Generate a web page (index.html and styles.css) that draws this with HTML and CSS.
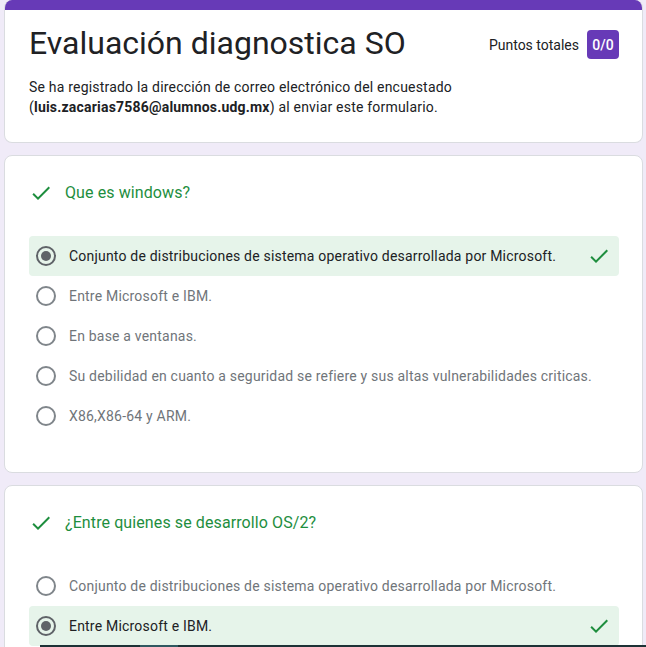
FILE: index.html
```html
<!DOCTYPE html>
<html lang="es">
<head>
<meta charset="utf-8">
<title>Evaluación diagnostica SO</title>
<link rel="stylesheet" href="styles.css">
</head>
<body>
<main class="page">
  <section class="card header-card">
    <div class="header-band"></div>
    <div class="header-body">
      <div class="title-row">
        <h1 class="title">Evaluación diagnostica SO</h1>
        <div class="score">
          <span class="score-label">Puntos totales</span>
          <span class="score-badge">0/0</span>
        </div>
      </div>
      <p class="desc">Se ha registrado la dirección de correo electrónico del encuestado (<b>luis.zacarias7586@alumnos.udg.mx</b>) al enviar este formulario.</p>
    </div>
  </section>

  <section class="card question-card">
    <div class="question">
      <svg class="check" viewBox="0 0 24 24"><path d="M9 16.17L4.83 12l-1.42 1.41L9 19 21 7l-1.41-1.41z"/></svg>
      <span class="q-text">Que es windows?</span>
    </div>
    <div class="options">
      <div class="option selected">
        <span class="radio checked"></span>
        <span class="opt-text">Conjunto de distribuciones de sistema operativo desarrollada por Microsoft.</span>
        <svg class="check opt-check" viewBox="0 0 24 24"><path d="M9 16.17L4.83 12l-1.42 1.41L9 19 21 7l-1.41-1.41z"/></svg>
      </div>
      <div class="option">
        <span class="radio"></span>
        <span class="opt-text">Entre Microsoft e IBM.</span>
      </div>
      <div class="option">
        <span class="radio"></span>
        <span class="opt-text">En base a ventanas.</span>
      </div>
      <div class="option">
        <span class="radio"></span>
        <span class="opt-text">Su debilidad en cuanto a seguridad se refiere y sus altas vulnerabilidades criticas.</span>
      </div>
      <div class="option">
        <span class="radio"></span>
        <span class="opt-text">X86,X86-64 y ARM.</span>
      </div>
    </div>
  </section>

  <section class="card question-card">
    <div class="question">
      <svg class="check" viewBox="0 0 24 24"><path d="M9 16.17L4.83 12l-1.42 1.41L9 19 21 7l-1.41-1.41z"/></svg>
      <span class="q-text">¿Entre quienes se desarrollo OS/2?</span>
    </div>
    <div class="options">
      <div class="option">
        <span class="radio"></span>
        <span class="opt-text">Conjunto de distribuciones de sistema operativo desarrollada por Microsoft.</span>
      </div>
      <div class="option selected">
        <span class="radio checked"></span>
        <span class="opt-text">Entre Microsoft e IBM.</span>
        <svg class="check opt-check" viewBox="0 0 24 24"><path d="M9 16.17L4.83 12l-1.42 1.41L9 19 21 7l-1.41-1.41z"/></svg>
      </div>
      <div class="option">
        <span class="radio"></span>
        <span class="opt-text">En base a ventanas.</span>
      </div>
    </div>
  </section>
</main>
<div class="taskbar"><span class="taskbar-active"></span></div>
</body>
</html>
```

FILE: styles.css
```css
html, body {
  margin: 0;
  padding: 0;
  background: #f0ebf8;
  font-family: Roboto, "Liberation Sans", Arial, sans-serif;
  color: #202124;
  overflow: hidden;
}

.page {
  width: 639px;
  margin: 0 3px 0 4px;
}

.card {
  background: #fff;
  border: 1px solid #dadce0;
  border-radius: 8px;
  margin-bottom: 12px;
  overflow: hidden;
}

.header-card {
  border-top: none;
}

.header-band {
  height: 10px;
  background: #673ab7;
}

.header-body {
  padding: 13px 23px 25px 24px;
}

.title-row {
  display: flex;
  align-items: flex-start;
  justify-content: space-between;
}

.title {
  margin: 0;
  font-size: 32px;
  line-height: 40px;
  font-weight: 400;
  color: #202124;
}

.score {
  display: flex;
  align-items: center;
  gap: 8px;
  margin-top: 7px;
}

.score-label {
  font-size: 14px;
  color: #202124;
}

.score-badge {
  display: inline-flex;
  align-items: center;
  justify-content: center;
  width: 32px;
  height: 29px;
  background: #673ab7;
  color: #fff;
  border-radius: 4px;
  font-size: 14px;
  font-weight: 500;
}

.desc {
  margin: 14px 0 0;
  font-size: 14px;
  line-height: 20px;
  letter-spacing: 0.2px;
  color: #202124;
}

.desc b {
  font-weight: 700;
}

.question-card {
  padding: 25px 23px 36px 24px;
}

.question {
  display: flex;
  align-items: center;
  gap: 12px;
  height: 24px;
}

.check {
  width: 24px;
  height: 24px;
  fill: #1e8e3e;
  flex: none;
}

.q-text {
  font-size: 16px;
  line-height: 24px;
  letter-spacing: 0.1px;
  color: #1e8e3e;
}

.options {
  margin-top: 31px;
}

.option {
  display: flex;
  align-items: center;
  height: 40px;
  padding: 0 8px 0 7px;
  border-radius: 4px;
}

.option.selected {
  background: #e6f4ea;
}

.radio {
  width: 20px;
  height: 20px;
  box-sizing: border-box;
  border: 2px solid #80868b;
  border-radius: 50%;
  flex: none;
  margin-right: 13px;
  position: relative;
}

.radio.checked {
  border-color: #5f6368;
}

.radio.checked::after {
  content: "";
  position: absolute;
  left: 3px;
  top: 3px;
  width: 10px;
  height: 10px;
  border-radius: 50%;
  background: #5f6368;
}

.opt-text {
  flex: 1;
  font-size: 14px;
  line-height: 20px;
  letter-spacing: 0.2px;
  color: #70757a;
}

.option.selected .opt-text {
  color: #202124;
}

.opt-check {
  margin-left: 8px;
}

.taskbar {
  position: fixed;
  left: 40px;
  right: 0;
  bottom: 0;
  height: 2px;
  background: #1d3236;
}

.taskbar-active {
  position: absolute;
  left: 100px;
  top: 0;
  width: 38px;
  height: 2px;
  background: #2f5860;
}
```
